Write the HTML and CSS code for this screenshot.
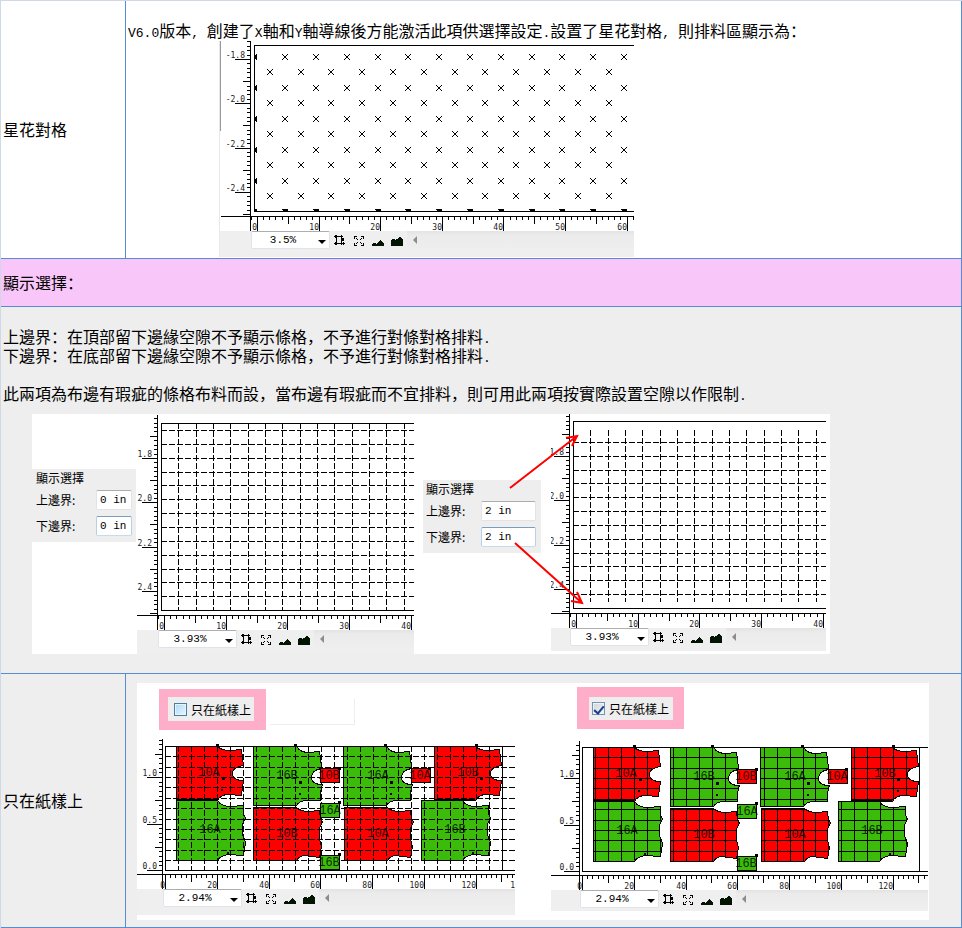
FILE: index.html
```html
<!DOCTYPE html>
<html lang="zh">
<head>
<meta charset="utf-8">
<title>顯示選擇</title>
<link rel="stylesheet" href="styles.css">
</head>
<body>
<svg class="sprite" aria-hidden="true">
  <symbol id="i-crop" viewBox="0 0 12 12"><path d="M0 1h9v1H0zM2 1h1v8H2zM0 8h11v1H0zM7 1h1v9H7zM1 0h2v3H1zM7 0h1v1H7zM1 7h2v3H1zM7 3h3v3H7zM9 7h1v3H9z"/></symbol>
  <symbol id="i-fit" viewBox="0 0 12 12"><path d="M1 1h3v1H2v2H1zM8 1h3v3h-1V2H8zM1 8h1v2h2v1H1zM10 8h1v3H8v-1h2zM3 3h1v1H3zM4 4h1v1H4zM8 3h1v1H8zM7 4h1v1H7zM3 8h1v1H3zM4 7h1v1H4zM8 8h1v1H8zM7 7h1v1H7z"/></symbol>
  <symbol id="i-small" viewBox="0 0 12 12"><path d="M0 11V9l2-1 1-1 1 2 2-1 1-2 2-1 1 2 2 2v2z" fill="#021402"/></symbol>
  <symbol id="i-big" viewBox="0 0 12 12"><path d="M0 11V5l2-1 1-1 1 2 2-1 2-2 1-1 1 2 2 2v6z" fill="#021402"/></symbol>
</svg>

<table class="doc">
  <tr class="row-star">
    <th scope="row">星花對格</th>
    <td>
      <p><span class="latin">V6.0</span>版本<span class="latin">, </span>創建了<span class="latin">X</span>軸和<span class="latin">Y</span>軸導線後方能激活此項供選擇設定<span class="latin">.</span>設置了星花對格<span class="latin">, </span>則排料區顯示為：</p>
      <div class="window window-star">
        <svg class="plot" id="plot-star" width="414" height="190" viewBox="220 41 414 190"></svg>
        <div class="toolbar">
          <label class="zoom"><select aria-label="縮放"><option>3.5%</option></select></label>
          <button type="button" aria-label="框選"><svg><use href="#i-crop"/></svg></button>
          <button type="button" aria-label="全圖"><svg><use href="#i-fit"/></svg></button>
          <button type="button" aria-label="縮小"><svg><use href="#i-small"/></svg></button>
          <button type="button" aria-label="放大"><svg><use href="#i-big"/></svg></button>
          <div class="scroll"></div>
        </div>
      </div>
    </td>
  </tr>
  <tr class="row-title"><th colspan="2" scope="colgroup">顯示選擇：</th></tr>
  <tr class="row-margin">
    <td colspan="2">
      <p>上邊界：在頂部留下邊緣空隙不予顯示條格，不予進行對條對格排料<span class="latin">.</span><br>下邊界：在底部留下邊緣空隙不予顯示條格，不予進行對條對格排料<span class="latin">.</span></p>
      <p>此兩項為布邊有瑕疵的條格布料而設，當布邊有瑕疵而不宜排料，則可用此兩項按實際設置空隙以作限制<span class="latin">.</span></p>
      <div class="figure figure-margin">
        <fieldset class="dialog dialog-narrow">
          <legend>顯示選擇</legend>
          <div class="field"><label for="top-a">上邊界:</label><input id="top-a" type="text" value="0 in"></div>
          <div class="field"><label for="bottom-a">下邊界:</label><input id="bottom-a" class="focus" type="text" value="0 in"></div>
        </fieldset>
        <div class="window">
          <svg class="plot" id="plot-full" width="277" height="216" viewBox="137 414 277 216"></svg>
          <div class="toolbar toolbar-full">
            <label class="zoom"><select aria-label="縮放"><option>3.93%</option></select></label>
            <button type="button" aria-label="框選"><svg><use href="#i-crop"/></svg></button>
            <button type="button" aria-label="全圖"><svg><use href="#i-fit"/></svg></button>
            <button type="button" aria-label="縮小"><svg><use href="#i-small"/></svg></button>
            <button type="button" aria-label="放大"><svg><use href="#i-big"/></svg></button>
            <div class="scroll"></div>
          </div>
        </div>
        <fieldset class="dialog dialog-wide">
          <legend>顯示選擇</legend>
          <div class="field"><label for="top-b">上邊界:</label><input id="top-b" type="text" value="2 in"></div>
          <div class="field"><label for="bottom-b">下邊界:</label><input id="bottom-b" class="focus" type="text" value="2 in"></div>
        </fieldset>
        <div class="window">
          <svg class="plot" id="plot-inset" width="275" height="214" viewBox="551 414 275 214"></svg>
          <div class="toolbar toolbar-inset">
            <label class="zoom"><select aria-label="縮放"><option>3.93%</option></select></label>
            <button type="button" aria-label="框選"><svg><use href="#i-crop"/></svg></button>
            <button type="button" aria-label="全圖"><svg><use href="#i-fit"/></svg></button>
            <button type="button" aria-label="縮小"><svg><use href="#i-small"/></svg></button>
            <button type="button" aria-label="放大"><svg><use href="#i-big"/></svg></button>
            <div class="scroll"></div>
          </div>
        </div>
        <svg class="arrows" viewBox="32 414 798 240" aria-hidden="true"><path d="M510 488L577 436M566 438L577 436L572 446M515 543L582 603M571 601L582 603L577 592"/></svg>
      </div>
    </td>
  </tr>
  <tr class="row-pieces">
    <th scope="row">只在紙樣上</th>
    <td>
      <div class="figure figure-pieces">
        <div class="window">
          <div class="head head-off">
            <div class="mark"><label><input type="checkbox">只在紙樣上</label></div>
            <div class="stub"></div>
          </div>
          <svg class="plot" id="plot-all" width="378" height="150" viewBox="137 739 378 150"></svg>
          <div class="toolbar toolbar-all">
            <label class="zoom"><select aria-label="縮放"><option>2.94%</option></select></label>
            <button type="button" aria-label="框選"><svg><use href="#i-crop"/></svg></button>
            <button type="button" aria-label="全圖"><svg><use href="#i-fit"/></svg></button>
            <button type="button" aria-label="縮小"><svg><use href="#i-small"/></svg></button>
            <button type="button" aria-label="放大"><svg><use href="#i-big"/></svg></button>
            <div class="scroll"></div>
          </div>
        </div>
        <div class="window">
          <div class="head head-on">
            <div class="mark"><label><input type="checkbox" checked>只在紙樣上</label></div>
          </div>
          <svg class="plot" id="plot-clipped" width="377" height="150" viewBox="134 739 377 150"></svg>
          <div class="toolbar toolbar-clipped">
            <label class="zoom"><select aria-label="縮放"><option>2.94%</option></select></label>
            <button type="button" aria-label="框選"><svg><use href="#i-crop"/></svg></button>
            <button type="button" aria-label="全圖"><svg><use href="#i-fit"/></svg></button>
            <button type="button" aria-label="縮小"><svg><use href="#i-small"/></svg></button>
            <button type="button" aria-label="放大"><svg><use href="#i-big"/></svg></button>
            <div class="scroll"></div>
          </div>
        </div>
      </div>
    </td>
  </tr>
</table>
<script src="plots.js"></script>
</body>
</html>
```
FILE: styles.css
```css
* { box-sizing: border-box; }

body {
  margin: 0;
  background: #fff;
  color: #000;
  font: 16px/19px "Noto Sans CJK SC", sans-serif;
}

p { margin: 19px 0 0; }
.latin { font-family: "Liberation Mono", monospace; font-size: 13px; line-height: 1; white-space: pre; }
.sprite { position: absolute; width: 0; height: 0; }

.doc {
  width: 100%;
  border-collapse: separate;
  border-spacing: 0;
  border: 0 solid #d0d7e5;
  border-width: 1px 0 0 1px;
}
.doc th, .doc td {
  padding: 1px 2px;
  border: 0 solid #548dd4;
  border-width: 0 1px 1px 0;
  text-align: left;
  font-weight: inherit;
}
.row-star th, .row-pieces th { width: 125px; }
.row-title th { height: 48px; background: #f8c6f9; }
.row-margin td, .row-pieces th, .row-pieces td { background: #eee; }

.figure { display: flex; align-items: flex-start; background: #fff; }
.figure-margin { position: relative; width: 798px; margin: 11px 0 18px 29px; }
.figure-pieces { width: 792px; gap: 36px; margin: 8px 0 6px 9px; padding-bottom: 5px; }
.arrows { position: absolute; inset: 0; width: 100%; height: 100%; pointer-events: none; }
.arrows path { fill: none; stroke: #f00; stroke-width: 2; }

.window-star { width: 415px; margin: 1px 0 0 91px; border-left: 1px solid #e8e8e8; }
.plot { display: block; background: #fff; }
.plot line, .plot rect, .plot .shape { shape-rendering: crispEdges; }
.plot text { font: 8px "DejaVu Sans Mono", monospace; fill: #222; }
.plot .name { font: 12px "Liberation Mono", monospace; fill: #000; fill-opacity: .8; }

.toolbar {
  display: flex;
  align-items: flex-start;
  height: 26px;
  padding-left: 31px;
  background: #efefef;
}
.toolbar-full { height: 24px; padding-left: 21px; }
.toolbar-inset { height: 23px; padding-left: 19px; }
.toolbar-all { padding-left: 26px; }
.toolbar-clipped { height: 21px; padding-left: 29px; }
.zoom { position: relative; width: 79px; height: 18px; margin-right: 4px; }
.zoom::after {
  content: "";
  position: absolute;
  right: 4px;
  top: 9px;
  border: 4px solid transparent;
  border-top-color: #000;
  border-bottom: 0;
}
.zoom select {
  display: block;
  width: 100%;
  height: 18px;
  margin: 0;
  padding: 0 15px 0 0;
  appearance: none;
  border: 1px solid #e2e3ea;
  border-top-color: #abadb3;
  border-radius: 2px;
  background: #fff;
  color: #000;
  font: 11px/14px "Liberation Mono", monospace;
  text-align: center;
  text-align-last: center;
}
.toolbar button {
  width: 12px;
  height: 16px;
  margin-right: 7px;
  padding: 4px 0 0;
  border: 0;
  background: none;
}
.toolbar button:last-of-type { margin-right: 4px; }
.toolbar button svg { display: block; width: 12px; height: 12px; shape-rendering: crispEdges; }
.scroll { flex: 1; height: 17px; padding: 5px 6px; background: linear-gradient(#e3e3e3, #ebebeb 4px, #eee); }
.scroll::before {
  content: "";
  display: block;
  width: 0;
  border: 4px solid transparent;
  border-right-color: #8c8c8c;
  border-left: 0;
}

.dialog {
  min-width: 0;
  margin: 0;
  padding: 0 4px 6px 4px;
  border: 0;
  background: #eee;
  font-size: 12px;
  line-height: 20px;
}
.dialog legend { float: left; width: 100%; padding: 0; line-height: 18px; }
.dialog-narrow { width: 104px; margin: 55px 1px 0 0; }
.dialog-wide { width: 118px; margin: 66px 10px 0 9px; padding-left: 3px; padding-right: 5px; }
.field { display: flex; clear: both; justify-content: space-between; margin-bottom: 6px; }
.dialog legend + .field { padding-top: 3px; }
.field:last-child { margin-bottom: 0; }
.dialog input {
  width: 36px;
  height: 20px;
  padding: 0 0 0 3px;
  border: 1px solid #e2e3ea;
  border-top-color: #abadb3;
  border-radius: 2px;
  background: #fff;
  color: #000;
  font: 11px "Liberation Mono", monospace;
}
.dialog-wide input { width: 55px; }
.dialog input.focus { border-color: #7a9cc0 #b7d0ea #c5dcf0; }

.head { display: flex; align-items: flex-start; gap: 4px; }
.head-off { height: 56px; padding: 6px 0 0 22px; }
.head-on { height: 57px; padding: 4px 0 0 26px; }
.mark { padding: 8px 12px 9px 9px; background: #ffaec9; }
.head-on .mark { padding: 10px 11px 9px 12px; }
.mark label {
  display: flex;
  align-items: center;
  gap: 4px;
  width: 86px;
  height: 24px;
  padding-left: 6px;
  background: #eee;
  font-size: 12px;
  white-space: nowrap;
}
.head-on .mark label { width: 84px; height: 23px; padding-left: 3px; }
.mark input {
  display: grid;
  place-items: center;
  flex: none;
  width: 13px;
  height: 13px;
  margin: 0;
  appearance: none;
  border: 1px solid #4c7ea3;
  background: linear-gradient(135deg, #a9d9f7, #eaf7fe);
  box-shadow: inset 0 0 0 1px #e8f4fb;
}
.mark input:checked { border-color: #7a93ac; background: linear-gradient(135deg, #cdd5dc, #f6f6f6); }
.mark input:checked::before {
  content: "";
  width: 4px;
  height: 8px;
  border: solid #1c3c8c;
  border-width: 0 2px 2px 0;
  transform: rotate(40deg);
}
.stub { width: 85px; height: 26px; margin-top: 10px; border: solid #eee; border-width: 0 1px 1px 0; }
```
FILE: plots.js
```js
const NS = "http://www.w3.org/2000/svg";

function add(parent, tag, attrs, text) {
  const el = document.createElementNS(NS, tag);
  for (const k in attrs) el.setAttribute(k, attrs[k]);
  if (text) el.textContent = text;
  parent.appendChild(el);
  return el;
}

// One-pixel strokes are centred on half pixels so that they stay sharp.
function hline(g, x1, x2, y, extra) {
  add(g, "line", { x1, x2, y1: y + 0.5, y2: y + 0.5, stroke: "#000", ...extra });
}
function vline(g, x, y1, y2, extra) {
  add(g, "line", { x1: x + 0.5, x2: x + 0.5, y1, y2, stroke: "#000", ...extra });
}

function rulers(g, o) {
  const base = o.baseY;
  vline(g, o.axisX, o.top, base + 15);
  hline(g, o.left, o.right, base);
  for (let k = -1; o.x0 + k * o.xMajor / 10 < o.right; k++) {
    const x = Math.round(o.x0 + k * o.xMajor / 10);
    if (x <= o.axisX) continue;
    const len = k % 10 === 0 ? 15 : k % 5 === 0 ? 8 : 4;
    vline(g, x, base, base + len);
  }
  o.xLabels.forEach((t, i) =>
    add(g, "text", { x: Math.min(o.right, Math.round(o.x0 + i * o.xMajor)), y: base + 14, "text-anchor": "end" }, t));
  const first = Math.ceil((o.top - o.y0) / (o.yMajor / 10));
  for (let k = first; o.y0 + k * o.yMajor / 10 < base; k++) {
    const y = Math.round(o.y0 + k * o.yMajor / 10);
    const len = k % 10 === 0 ? 15 : k % 5 === 0 ? 7 : 3;
    hline(g, o.axisX - len, o.axisX, y);
  }
  o.yLabels.forEach((t, i) =>
    add(g, "text", { x: o.axisX - 5, y: Math.round(o.y0 + i * o.yMajor) - 1, "text-anchor": "end" }, t));
}

function frame(g, x, y, right, bottom) {
  hline(g, x, right, y);
  hline(g, x, right, bottom);
  vline(g, x, y, bottom);
}

function grid(g, xs, ys, box, extra) {
  for (let i = 0; i < xs.n; i++) vline(g, Math.round(xs.from + i * xs.step), box.y1, box.y2, extra);
  for (let i = 0; i < ys.n; i++) hline(g, box.x1, box.x2, Math.round(ys.from + i * ys.step), extra);
}

const dash = { "stroke-dasharray": "6 2" };

// Star marks
{
  const g = document.getElementById("plot-star");
  add(g, "rect", { x: 220, y: 41, width: 1, height: 90, fill: "#999" });
  const clip = add(g, "clipPath", { id: "star-area" });
  add(clip, "rect", { x: 254, y: 45, width: 380, height: 166 });
  const stars = add(g, "g", { "clip-path": "url(#star-area)", fill: "#000" });
  for (let r = 0; r <= 10; r++) {
    const odd = r % 2;
    for (let c = 0; c < 13 - odd; c++) {
      const x = Math.round(254.3 + odd * 15.5 + c * 30.8);
      const y = Math.round(57 + r * 15.45);
      for (let d = -3; d <= 2; d++) {
        add(stars, "rect", { x: x + d, y: y + d, width: 1, height: 1 });
        add(stars, "rect", { x: x + d, y: y - d - 1, width: 1, height: 1 });
      }
      if (!odd && c === 0) add(stars, "rect", { x: 255, y: y - 2, width: 2, height: 4 });
      if (r === 10) add(stars, "rect", { x: x - 2, y: 209, width: 5, height: 2 });
    }
  }
  frame(g, 254, 45, 634, 211);
  rulers(g, { axisX: 250, top: 41, baseY: 216, left: 221, right: 634, x0: 257, xMajor: 61.6,
    xLabels: ["0", "10", "20", "30", "40", "50", "60"], y0: 59, yMajor: 44.3,
    yLabels: ["-1.8", "-2.0", "-2.2", "-2.4"] });
}

// Grid over the whole fabric
{
  const g = document.getElementById("plot-full");
  frame(g, 161, 423, 414, 610);
  grid(g, { from: 178.4, step: 17.32, n: 14 }, { from: 430, step: 13.85, n: 13 },
    { x1: 161, x2: 414, y1: 423, y2: 610 }, dash);
  rulers(g, { axisX: 157, top: 415, baseY: 615, left: 137, right: 414, x0: 164, xMajor: 61.7,
    xLabels: ["0", "10", "20", "30", "40"], y0: 458, yMajor: 44.3,
    yLabels: ["1.8", "2.0", "2.2", "2.4"] });
}

// Grid with a margin at the top and bottom
{
  const g = document.getElementById("plot-inset");
  frame(g, 573, 421, 826, 608);
  grid(g, { from: 590.4, step: 17.32, n: 14 }, { from: 442, step: 13.83, n: 12 },
    { x1: 573, x2: 826, y1: 430, y2: 602 }, dash);
  rulers(g, { axisX: 569, top: 414, baseY: 613, left: 551, right: 826, x0: 576, xMajor: 61.7,
    xLabels: ["0", "10", "20", "30", "40"], y0: 456, yMajor: 44.3,
    yLabels: ["1.8", "2.0", "2.2", "2.4"] });
}

// Garment pieces
const RED = "#ff0000", GREEN = "#3cbc0a";
const FRONT = "M176 746H217Q221 750 230 750L241 749L242 757L243 765C235 766 232 769 232 773C232 778 236 780 243 780L242 787L241 795L228 794Q220 794 217 800H176Z";
const BACK = "M176 800H217Q221 806 230 806L243 805V813L245 818L242 823V834L245 842L243 855L228 854Q220 855 217 860H176Z";
const WIDE = "M253 746H296Q300 752 308 752L319 751L320 757L321 768C314 769 311 772 311 777C311 782 315 784 322 784L320 791V800H307Q299 800 296 805H253Z";
const LOW = "M253 807H296Q300 811 308 811L319 810L320 818L322 821L319 828V838L321 846L319 857L303 855Q298 856 296 860H253Z";
const SMALL = "M320 768H339V782H320Z";
const pieces = [
  [FRONT, 0, 0, RED, "10A", 209, 776],
  [BACK, 0, 0, GREEN, "16A", 210, 833],
  [WIDE, 0, 0, GREEN, "16B", 287, 779],
  [LOW, 0, 0, RED, "10B", 287, 837],
  [WIDE, 90, 0, GREEN, "16A", 378, 779],
  [LOW, 91, 0, RED, "10A", 378, 837],
  [FRONT, 258, 0, RED, "10B", 468, 776],
  [BACK, 245, 0, GREEN, "16B", 455, 833],
  [SMALL, 0, 0, RED, "10B", 329, 779],
  [SMALL, 91, 0, RED, "10A", 420, 779],
  [SMALL, 0, 35, GREEN, "16A", 330, 814],
  [SMALL, 0, 87, GREEN, "16B", 329, 866]
];
const dots = [
  [216, 744, 3], [294, 744, 3], [384, 744, 3], [475, 744, 3],
  [338, 767, 3], [428, 767, 3], [338, 801, 3], [338, 853, 3],
  [222, 777, 3], [221, 789, 2], [299, 781, 3], [299, 793, 2],
  [390, 781, 3], [390, 793, 2], [480, 777, 3], [480, 789, 2],
  [227, 852, 2], [472, 852, 2]
];

function marker(id, clipped) {
  const g = document.getElementById(id);
  const right = clipped ? 511 : 515;
  pieces.forEach(([d, dx, dy, fill]) =>
    add(g, "path", { d, fill, stroke: "#000", class: "shape", transform: `translate(${dx + 0.5} ${dy + 0.5})` }));
  // Small pieces are too narrow for grid lines and carry only their name.
  const layer = add(g, "g", {});
  if (clipped) {
    const clip = add(g, "clipPath", { id: id + "-clip" });
    pieces.filter(p => p[0] !== SMALL).forEach(([d, dx, dy]) =>
      add(clip, "path", { d, transform: `translate(${dx} ${dy})` }));
    layer.setAttribute("clip-path", `url(#${id}-clip)`);
  }
  grid(layer, { from: 178.3, step: 12.95, n: 27 }, { from: 756.3, step: 10.38, n: 11 },
    { x1: 165, x2: right, y1: 746, y2: 870 }, clipped ? {} : dash);
  pieces.filter(p => p[0] === SMALL).forEach(([d, dx, dy, fill]) =>
    add(g, "path", { d, fill, stroke: "#000", class: "shape", transform: `translate(${dx + 0.5} ${dy + 0.5})` }));
  hline(g, 176, 217, 799);
  hline(g, 434, 475, 799);
  frame(g, 165, 746, right, 870);
  vline(g, 502, 746, 870);
  dots.forEach(([x, y, s]) => add(g, "rect", { x, y, width: s, height: s }));
  pieces.forEach(([, , , , name, x, y]) =>
    add(g, "text", { x, y, class: "name", "text-anchor": "middle" }, name));
  const labels = ["0", "20", "40", "60", "80", "100", "120"];
  if (!clipped) labels.push("1");
  rulers(g, { axisX: 162, top: clipped ? 740 : 739, baseY: 874, left: 134, right, x0: 165, xMajor: 51.75,
    xLabels: labels, y0: 777, yMajor: 46.5,
    yLabels: ["1.0", "0.5", "0.0"] });
}
marker("plot-all", false);
marker("plot-clipped", true);
```
